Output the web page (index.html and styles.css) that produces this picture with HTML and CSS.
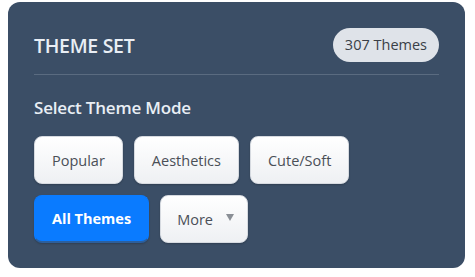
FILE: index.html
```html
<!DOCTYPE html>
<html lang="en">
<head>
    <meta charset="UTF-8">
    <meta name="viewport" content="width=device-width, initial-scale=1.0">
    <title>Theme Set</title>
    <link rel="stylesheet" href="styles.css">
</head>
<body>
    <div class="panel">
        <div class="panel-header">
            <h2 class="panel-title">THEME SET</h2>
            <span class="count-badge">307 Themes</span>
        </div>
        <div class="mode-label">Select Theme Mode</div>
        <div class="mode-buttons">
            <button class="mode-btn">Popular</button>
            <button class="mode-btn">Aesthetics</button>
            <button class="mode-btn">Cute/Soft</button>
        </div>
        <div class="mode-buttons">
            <button class="mode-btn active">All Themes</button>
            <button class="mode-btn more-btn">More
                <svg class="caret" width="8" height="7" viewBox="0 0 8 7"><path d="M0 0H8L4 7Z" fill="#8a8f96"/></svg>
            </button>
        </div>
    </div>
</body>
</html>
```

FILE: styles.css
```css
body {
    font-family: 'Open Sans', 'Noto Sans', sans-serif;
    margin: 0;
    padding: 2px 0 0 8px;
    background-color: #ffffff;
}
.panel {
    width: 457px;
    height: 266px;
    box-sizing: border-box;
    padding: 26px 26px 0 26px;
    background-color: #3b4e66;
    border-radius: 12px;
    color: #e9eef5;
}
.panel-header {
    display: flex;
    justify-content: space-between;
    align-items: center;
    padding-bottom: 12px;
    border-bottom: 1px solid #5a6b80;
}
.panel-title {
    margin: 0;
    font-size: 19.5px;
    font-weight: 600;
    letter-spacing: -0.3px;
}
.count-badge {
    height: 34px;
    line-height: 34px;
    padding: 0 12px;
    border-radius: 17px;
    background-color: #dfe3e9;
    color: #3a3f47;
    font-size: 14.5px;
}
.mode-label {
    margin-top: 21px;
    font-size: 17px;
    font-weight: 600;
    letter-spacing: -0.2px;
}
.mode-buttons {
    display: flex;
    gap: 11px;
    margin-top: 17px;
}
.mode-buttons + .mode-buttons {
    margin-top: 11px;
}
.mode-btn {
    height: 48px;
    padding: 0 17px;
    font-family: inherit;
    font-size: 14.5px;
    color: #4a4f57;
    background: linear-gradient(#ffffff, #eef0f3);
    border: 1px solid #d6dae0;
    border-radius: 8px;
    box-shadow: 0 1px 2px rgba(0, 0, 0, 0.2);
    cursor: pointer;
}
.mode-btn.active {
    background: #0a7bff;
    border-color: #0a7bff;
    border-bottom: 2px solid #2d5f9c;
    color: #ffffff;
    font-weight: 700;
}
.more-btn {
    display: flex;
    align-items: center;
    gap: 13px;
    padding: 0 13px 0 16px;
}
.caret {
    margin-top: -3px;
}
```
